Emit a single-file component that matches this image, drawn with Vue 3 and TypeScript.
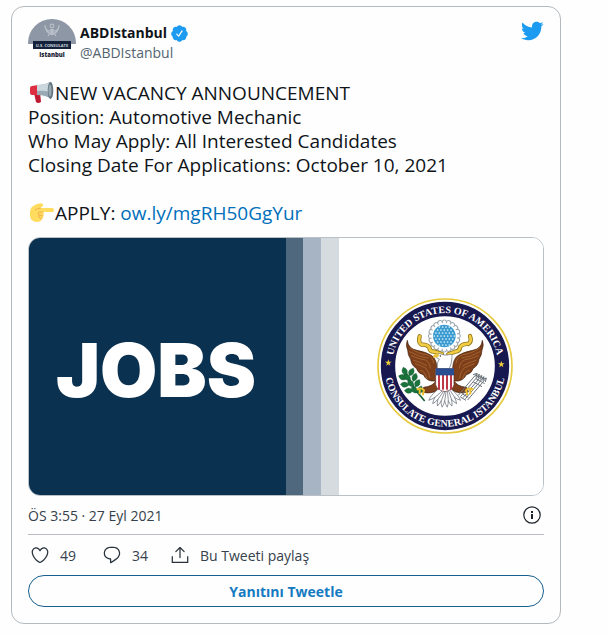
<script setup lang="ts">
interface Tweet {
  name: string
  handle: string
  lines: string[]
  link: string
  time: string
  likes: number
  replies: number
}

const tweet: Tweet = {
  name: 'ABDIstanbul',
  handle: '@ABDIstanbul',
  lines: [
    'Position: Automotive Mechanic',
    'Who May Apply: All Interested Candidates',
    'Closing Date For Applications: October 10, 2021',
  ],
  link: 'ow.ly/mgRH50GgYur',
  time: 'ÖS 3:55 · 27 Eyl 2021',
  likes: 49,
  replies: 34,
}

// Globe stars in the crest above the eagle: [x, y]
const crestStars: number[][] = []
for (let row = -3; row <= 3; row++) {
  const count = 7 - Math.abs(row)
  for (let i = 0; i < count; i++) {
    crestStars.push([223 + (i - (count - 1) / 2) * 10, 138 + row * 9])
  }
}

const cloudAngles: number[] = Array.from({ length: 20 }, (_, i) => i * 18)
const shieldStripes: number[] = [204, 216, 228, 240]
const tailAngles: number[] = [-48, -34, -20, -7, 7, 20, 34, 48]
const leaves: number[][] = [
  [104, 244, 70], [98, 262, 20], [124, 246, 120], [112, 262, 45], [134, 262, 110],
  [104, 284, 5], [122, 280, 50], [142, 280, 120], [116, 302, 0], [134, 300, 40], [150, 300, 110],
]
const arrows: number[] = [-14, -7, 0, 7, 14]
</script>

<template>
  <article class="card">
    <header class="head">
      <a class="author" href="#profile">
        <svg class="avatar" viewBox="0 0 48 48" aria-hidden="true">
          <clipPath id="avatar-clip"><circle cx="24" cy="24" r="24" /></clipPath>
          <g clip-path="url(#avatar-clip)">
            <rect width="48" height="48" fill="#fefefe" />
            <rect width="48" height="25" fill="#8e97a6" />
            <g fill="none" stroke="#b9c0ca" stroke-width="1.2">
              <circle cx="24" cy="7" r="1.800" />
              <path d="M17 6c0 4 2 6 5 6M31 6c0 4-2 6-5 6M18 10c1 3 2 4 4 4M30 10c-1 3-2 4-4 4M20 17l2-3M28 17l-2-3" />
              <path d="M24 10v6" stroke-width="3.500" />
            </g>
            <rect x="5" y="22" width="38" height="8" fill="#14213a" />
          </g>
          <text x="24" y="28" text-anchor="middle" class="avatar-top">U.S. CONSULATE</text>
          <text x="24" y="38" text-anchor="middle" class="avatar-city">Istanbul</text>
        </svg>
        <span class="names">
          <span class="name">{{ tweet.name }}
            <svg class="badge" viewBox="0 0 24 24" role="img" aria-label="✓">
              <circle cx="12" cy="12" r="7" fill="#fff" />
              <path fill="#1d9bf0" d="M22.5 12.5c0-1.58-.875-2.95-2.148-3.6.154-.435.238-.905.238-1.4 0-2.21-1.71-3.998-3.818-3.998-.47 0-.92.084-1.336.25C14.818 2.415 13.51 1.5 12 1.5s-2.816.917-3.437 2.25c-.415-.165-.866-.25-1.336-.25-2.11 0-3.818 1.79-3.818 4 0 .494.083.964.237 1.4-1.272.65-2.147 2.018-2.147 3.6 0 1.495.782 2.798 1.942 3.486-.02.17-.032.34-.032.514 0 2.21 1.708 4 3.818 4 .47 0 .92-.086 1.335-.25.62 1.334 1.926 2.25 3.437 2.25 1.512 0 2.818-.916 3.437-2.25.415.163.865.248 1.336.248 2.11 0 3.818-1.79 3.818-4 0-.174-.012-.344-.033-.513 1.158-.687 1.943-1.99 1.943-3.484zm-6.616-3.334l-4.334 6.5c-.145.217-.382.334-.625.334-.143 0-.288-.04-.416-.126l-.115-.094-2.415-2.415c-.293-.293-.293-.768 0-1.06s.768-.294 1.06 0l1.77 1.767 3.825-5.74c.23-.345.696-.436 1.04-.207.346.23.44.696.21 1.04z" />
            </svg>
          </span>
          <span class="handle">{{ tweet.handle }}</span>
        </span>
      </a>
      <a class="bird" href="#tweet">
        <svg viewBox="0 0 24 24" width="24" height="24" aria-hidden="true">
          <path fill="#1d9bf0" d="M23.643 4.937c-.835.37-1.732.62-2.675.733.962-.576 1.7-1.49 2.048-2.578-.9.534-1.897.922-2.958 1.13-.85-.904-2.06-1.47-3.4-1.47-2.572 0-4.658 2.086-4.658 4.66 0 .364.042.718.12 1.06-3.873-.195-7.304-2.05-9.602-4.868-.4.69-.63 1.49-.63 2.342 0 1.616.823 3.043 2.072 3.878-.764-.025-1.482-.234-2.11-.583v.06c0 2.257 1.605 4.14 3.737 4.568-.392.106-.803.162-1.227.162-.3 0-.593-.028-.877-.082.593 1.85 2.313 3.198 4.352 3.234-1.595 1.25-3.604 1.995-5.786 1.995-.376 0-.747-.022-1.112-.065 2.062 1.323 4.51 2.093 7.14 2.093 8.57 0 13.255-7.098 13.255-13.254 0-.2-.005-.402-.014-.602.91-.658 1.7-1.477 2.323-2.41z" />
        </svg>
      </a>
    </header>

    <div class="body">
      <p class="line">
        <svg class="emoji" viewBox="0 0 26 24" aria-hidden="true">
          <path fill="#be1931" d="M6 12l6-1 1 10q-3 2-5 0z" />
          <path fill="#dd2e44" d="M2 7q0-2 2-2l6-1v10l-6 0q-2 0-2-2z" />
          <path fill="#99aab5" d="M9 4Q17 4 22 1l1 17Q18 14 9 14z" />
          <path fill="#ccd6dd" d="M9 4Q17 4 22 1l-1 10Q16 9 9 10z" />
          <ellipse cx="22.500" cy="9.500" rx="2.800" ry="8.500" fill="#66757f" />
          <ellipse cx="22" cy="9.500" rx="1.500" ry="6" fill="#99aab5" />
        </svg><span>NEW VACANCY ANNOUNCEMENT</span>
      </p>
      <p v-for="line in tweet.lines" :key="line" class="line">{{ line }}</p>
      <p class="line apply">
        <svg class="emoji" viewBox="0 0 26 24" aria-hidden="true">
          <path fill="#ffdc5d" d="M2 11Q2 6 7 4q5-3 8-1 1 2-3 4l12 0q2 0 2 2t-2 2H15q2 2 0 4 1 2-1 3-1 3-5 3-7 0-7-7z" />
          <path fill="none" stroke="#f3b04f" stroke-width="1" d="M7 9q3-2 6-2M15 11h-4q-2 2 0 3l4 1M11 14q-1 3 3 4" />
        </svg><span>APPLY: <a href="#apply">{{ tweet.link }}</a></span>
      </p>
    </div>

    <a class="media" href="#photo">
      <svg viewBox="0 0 514 257" role="img" aria-label="JOBS">
        <defs>
          <path id="arc-top" d="M66 228a159 159 0 0 1 318 0" />
          <path id="arc-bottom" d="M43 228a182 182 0 0 0 364 0" />
          <path id="star" d="M0-10 2.500-3h7.500L4 1.500 6 9 0 4.500-6 9-4 1.500-10-3h7.500z" />
        </defs>
        <rect width="514" height="257" fill="#fff" />
        <rect width="258" height="257" fill="#0b3150" />
        <rect x="257" width="18" height="257" fill="#50687e" />
        <rect x="274" width="18" height="257" fill="#a6b4c3" />
        <rect x="292" width="18" height="257" fill="#d5dbdf" />
        <text x="127" y="159" text-anchor="middle" class="jobs">JOBS</text>

        <g transform="translate(341 52) scale(.33333)">
          <circle cx="225" cy="228" r="201" fill="#fff" stroke="#e6c93d" stroke-width="5" />
          <circle cx="225" cy="228" r="171" fill="#fff" stroke="#17184f" stroke-width="43" />
          <text class="seal-text"><textPath href="#arc-top" startOffset="50%" text-anchor="middle">UNITED STATES OF AMERICA</textPath></text>
          <text class="seal-text"><textPath href="#arc-bottom" startOffset="50%" text-anchor="middle">CONSULATE GENERAL ISTANBUL</textPath></text>
          <use href="#star" transform="translate(55 218)" fill="#f0cf3c" />
          <use href="#star" transform="translate(394 223)" fill="#f0cf3c" />

          <g fill="#fff" stroke="#9aa5ad" stroke-width="3">
            <circle v-for="a in cloudAngles" :key="a" cx="223" cy="97" r="7" :transform="`rotate(${a} 223 138)`" />
          </g>
          <circle cx="223" cy="138" r="39" fill="#fff" />
          <circle cx="223" cy="138" r="34" fill="#3b9bd0" />
          <circle v-for="(s, i) in crestStars" :key="i" :cx="s[0]" :cy="s[1]" r="2.500" fill="#d8f1fb" />

          <g fill="none" stroke="#927519" stroke-width="13" stroke-linecap="round" stroke-linejoin="round">
            <path d="M149 139q-5 17 5 25 16-2 24 8 1 14 16 13l22 7" />
            <path d="M300 138q6 17-5 24-16-2-25 9 0 13-15 14l-20 8" />
          </g>
          <g fill="none" stroke="#f0cd45" stroke-width="8" stroke-linecap="round" stroke-linejoin="round">
            <path d="M149 139q-5 17 5 25 16-2 24 8 1 14 16 13l22 7" />
            <path d="M300 138q6 17-5 24-16-2-25 9 0 13-15 14l-20 8" />
          </g>

          <g fill="#7c3f1a" stroke="#42210f" stroke-width="2">
            <path d="M112 151q2 25 29 30 31 6 46 17 12 10 14 35l-3 40-14 0q-18-4-23-18-17-4-22-20-15-9-17-27-9-13-9-28-7-13-1-29z" />
            <path d="M337 151q-2 25-29 30-31 6-46 17-12 10-14 35l3 40 14 0q18-4 23-18 17-4 22-20 15-9 17-27 9-13 9-28 7-13 1-29z" />
            <path d="M199 270q-9 19-38 22l-6 14q30 8 49-7zM251 270q9 19 38 22l6 14q-30 8-49-7z" />
          </g>
          <g fill="none" stroke="#b5733a" stroke-width="2" stroke-linecap="round">
            <path d="M121 174q26 19 50 20 17 6 20 25M124 197q22 10 42 13 13 6 15 24M136 221q22 8 32 14 10 12 12 29M119 185q30 18 55 19M131 211q22 6 39 16M152 241q12 0 19 25" />
            <path d="M328 174q-26 19-50 20-17 6-20 25M325 197q-22 10-42 13-13 6-15 24M313 221q-22 8-32 14-10 12-12 29M330 185q-30 18-55 19M318 211q-22 6-39 16M297 241q-12 0-19 25" />
          </g>
          <g fill="#fff" stroke="#626b74" stroke-width="2">
            <path v-for="a in tailAngles" :key="a" d="M219 290q-4 47 5 62 9-15 5-62z" :transform="`rotate(${a} 224 288)`" />
            <path d="M202 236q-2-20 6-29-13-3-12-12 12-9 26 0l12 0q13-6 12 7 0 16-8 34z" />
          </g>
          <path fill="#eec23a" d="M209 194l-13-3q-7 3-7 12l14-1z" />
          <circle cx="211" cy="198" r="2" fill="#222" />

          <path d="M197 236h55v48q-3 16-27 21-25-5-28-21z" fill="#fff" stroke="#642f36" stroke-width="2" />
          <rect v-for="x in shieldStripes" :key="x" :x="x" y="254" width="6" height="45" fill="#bd3848" />
          <path d="M197 235h55v21h-55z" fill="#294e91" />

          <path d="M104 239q18 47 60 94" fill="none" stroke="#176032" stroke-width="5" />
          <path v-for="(leaf, i) in leaves" :key="i" d="M-13 0q13-16 26 0-13 16-26 0z" fill="#19743b" stroke="#124b2c" stroke-width="1" :transform="`translate(${leaf[0]} ${leaf[1]}) rotate(${leaf[2]})`" />
          <g stroke="#6b737b" stroke-width="3" fill="none">
            <path v-for="a in arrows" :key="a" d="M279 323l56-66-3 12m3-12-12 4" :transform="`translate(${a} ${a / 2})`" />
            <path d="M271 321l17 10M278 312l17 10M318 266l26 15M310 276l26 14" />
          </g>
          <path d="M140 299q14-8 22 2l-4 15M310 299q-14-8-22 2l4 15M149 299v14M301 299v14" fill="none" stroke="#edc02e" stroke-width="6" />
        </g>
      </svg>
    </a>

    <div class="meta">
      <a class="muted" href="#tweet">{{ tweet.time }}</a>
      <a class="info" href="#info" aria-label="i">
        <svg viewBox="0 0 20 20" width="20" height="20" aria-hidden="true">
          <circle cx="10" cy="10" r="8.200" fill="none" stroke="#1c2329" stroke-width="1.200" />
          <path d="M10 6v2M10 9v5" stroke="#1c2329" stroke-width="2" />
        </svg>
      </a>
    </div>

    <div class="actions">
      <a class="action" href="#like">
        <svg viewBox="0 0 24 24" aria-hidden="true">
          <path d="M12 21.638h-.014C9.403 21.59 1.95 14.856 1.95 8.478c0-3.064 2.525-5.754 5.403-5.754 2.29 0 3.83 1.58 4.646 2.73.814-1.148 2.354-2.73 4.645-2.73 2.88 0 5.404 2.69 5.404 5.755 0 6.376-7.454 13.11-10.037 13.157H12zM7.354 4.225c-2.08 0-3.903 1.988-3.903 4.255 0 5.74 7.034 11.596 8.55 11.658 1.518-.062 8.55-5.917 8.55-11.658 0-2.267-1.823-4.255-3.903-4.255-2.528 0-3.94 2.936-3.952 2.965-.23.562-1.156.562-1.387 0-.014-.03-1.425-2.965-3.954-2.965z" />
        </svg>
        <span>{{ tweet.likes }}</span>
      </a>
      <a class="action" href="#reply">
        <svg viewBox="0 0 24 24" aria-hidden="true">
          <path d="M14.046 2.242l-4.148-.01h-.002c-4.374 0-7.8 3.427-7.8 7.802 0 4.098 3.186 7.206 7.465 7.37v3.828c0 .108.044.286.12.403.142.225.384.347.632.347.138 0 .277-.038.402-.118.264-.168 6.473-4.14 8.088-5.506 1.902-1.61 3.04-3.97 3.043-6.312v-.017c-.006-4.367-3.43-7.787-7.8-7.788zm3.787 12.972c-1.134.96-4.862 3.405-6.772 4.643V16.67c0-.414-.335-.75-.75-.75h-.396c-3.66 0-6.318-2.476-6.318-5.886 0-3.534 2.768-6.302 6.3-6.302l4.147.01h.002c3.532 0 6.3 2.766 6.302 6.296-.003 1.91-.942 3.844-2.514 5.176z" />
        </svg>
        <span>{{ tweet.replies }}</span>
      </a>
      <button class="action" type="button">
        <svg viewBox="0 0 24 24" aria-hidden="true">
          <path d="M17.53 7.47l-5-5c-.293-.293-.768-.293-1.06 0l-5 5c-.294.293-.294.768 0 1.06s.767.294 1.06 0l3.72-3.72V15c0 .414.336.75.75.75s.75-.336.75-.75V4.81l3.72 3.72c.146.147.338.22.53.22s.384-.072.53-.22c.293-.293.293-.767 0-1.06z" />
          <path d="M2 13.500h1.500v6.500h17v-6.500H22v8H2z" />
        </svg>
        <span>Bu Tweeti paylaş</span>
      </button>
    </div>

    <button class="reply" type="button">Yanıtını Tweetle</button>
  </article>
</template>

<style>
body {
  background: #fefefe;
}
</style>

<style scoped>
.card {
  box-sizing: border-box;
  max-width: 550px;
  margin: 6px 11px;
  padding: 12px 16px 16px;
  border: 1px solid #b4b9bd;
  border-radius: 13px;
  background: #fefefe;
  color: #0f1419;
  font-family: "Open Sans", "Noto Sans", sans-serif;
}
a {
  color: inherit;
  text-decoration: none;
}
.head {
  display: flex;
  justify-content: space-between;
  align-items: flex-start;
}
.author {
  display: flex;
  gap: 4px;
}
.avatar {
  width: 48px;
  height: 48px;
}
.avatar-top {
  font-size: 4px;
  font-weight: 700;
  fill: #ccd3dc;
}
.avatar-city {
  font-size: 6px;
  font-weight: 800;
  fill: #1d2534;
}
.names {
  display: flex;
  flex-direction: column;
  padding-top: 4px;
  font-size: 14px;
  line-height: 20px;
}
.name {
  display: flex;
  align-items: center;
  gap: 3px;
  font-weight: 700;
}
.badge {
  width: 19px;
  height: 19px;
}
.handle {
  color: #536471;
}
.bird {
  display: flex;
}
.body {
  padding: 14px 0 12px;
  font-size: 19px;
  line-height: 24px;
}
.line {
  display: flex;
  align-items: center;
  margin: 0;
}
.apply {
  margin-top: 24px;
}
.apply a {
  color: #006fbb;
}
.emoji {
  width: 26px;
  height: 24px;
  margin-right: 1px;
}
.media {
  display: block;
  overflow: hidden;
  border: 1px solid #b9c1c7;
  border-radius: 12px;
}
.media svg {
  display: block;
  width: 100%;
}
.jobs {
  font-family: Inter, sans-serif;
  font-size: 74px;
  font-weight: 900;
  fill: #fff;
}
.seal-text {
  font-family: "Liberation Serif", serif;
  font-size: 30px;
  font-weight: 700;
  fill: #fff;
}
.meta {
  display: flex;
  justify-content: space-between;
  align-items: center;
  height: 38px;
  border-bottom: 1px solid #b9bdc1;
  font-size: 14px;
}
.muted,
.action {
  color: #35414b;
}
.info {
  display: flex;
  padding-right: 2px;
}
.actions {
  display: grid;
  grid-template-columns: 72px 68px auto;
  justify-content: start;
  align-items: center;
  height: 40px;
  padding-left: 2px;
  font-size: 14px;
}
.action {
  display: flex;
  align-items: center;
  gap: 10px;
  padding: 0;
  border: 0;
  background: none;
  font: inherit;
}
.action svg {
  width: 20px;
  height: 20px;
  fill: #2a333b;
}
.reply {
  width: 100%;
  height: 32px;
  padding: 0 16px;
  border: 1px solid #175f8f;
  border-radius: 16px;
  background: #fefefe;
  color: #147ac2;
  font: inherit;
  font-size: 14px;
  font-weight: 700;
}
</style>
